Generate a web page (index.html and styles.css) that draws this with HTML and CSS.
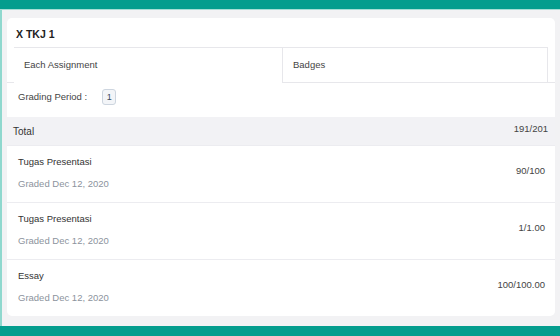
FILE: index.html
```html
<!DOCTYPE html>
<html lang="en">
<head>
<meta charset="UTF-8" />
<meta name="viewport" content="width=device-width, initial-scale=1" />
<title>X TKJ 1 - Grades</title>
<link rel="stylesheet" href="styles.css">
</head>
<body>

  <div class="topbar"></div>

  <div class="page">
    <div class="card">
      <h1 class="class-name">X TKJ 1</h1>

      <!-- Tabs -->
      <div class="tabs">
        <div class="tab active">Each Assignment</div>
        <div class="tab">Badges</div>
      </div>

      <div class="period">
        Grading Period :
        <span class="period-badge">1</span>
      </div>

      <div class="total-row">
        <span class="total-label">Total</span>
        <span class="total-score">191/201</span>
      </div>

      <ul class="grades">
        <li class="grade">
          <div class="grade-info">
            <div class="grade-title">Tugas Presentasi</div>
            <div class="grade-date">Graded Dec 12, 2020</div>
          </div>
          <div class="grade-score">90/100</div>
        </li>
        <li class="grade">
          <div class="grade-info">
            <div class="grade-title">Tugas Presentasi</div>
            <div class="grade-date">Graded Dec 12, 2020</div>
          </div>
          <div class="grade-score">1/1.00</div>
        </li>
        <li class="grade">
          <div class="grade-info">
            <div class="grade-title">Essay</div>
            <div class="grade-date">Graded Dec 12, 2020</div>
          </div>
          <div class="grade-score">100/100.00</div>
        </li>
      </ul>
    </div>
  </div>

  <div class="bottombar"></div>

</body>
</html>
```

FILE: styles.css
```css
/* Page frame */
body {
  margin: 0;
  padding: 0;
  font-family: 'Liberation Sans', Arial, sans-serif;
  font-size: 9.5px;
  color: #3a3a3a;
  background: #f2f2f4;
  height: 336px;
  overflow: hidden;
}
.topbar {
  height: 9px;
  background: #049d8e;
  border-bottom: 1px solid #a6ded6;
}
.bottombar {
  height: 10px;
  background: #049d8e;
}
.page {
  height: 298px;
  padding: 8px 5px 10px 5px;
  border-left: 2px solid #8fd8ce;
}

/* Card */
.card {
  height: 298px;
  background: #fff;
  border-radius: 5px;
  overflow: hidden;
}
.class-name {
  margin: 0;
  padding: 9px 9px 6px;
  font-size: 10.5px;
  line-height: 14px;
  font-weight: bold;
  color: #222;
}

/* Tabs */
.tabs {
  display: flex;
  padding: 0 7px;
  border-bottom: 1px solid #e7e7eb;
}
.tab {
  flex: 1;
  padding-left: 10px;
  line-height: 34px;
  border: 1px solid #e7e7eb;
  border-bottom: 0;
  color: #444;
}
.tab.active {
  flex: 0 0 258px;
  border-left: 0;
  border-right: 0;
  border-bottom: 1px solid #fff;
  margin-bottom: -1px;
}

/* Grading period */
.period {
  display: flex;
  align-items: flex-start;
  height: 27px;
  padding: 7px 0 0 11px;
  line-height: 14px;
  color: #444;
}
.period-badge {
  margin: -1px 0 0 15px;
  width: 12px;
  height: 14px;
  line-height: 14px;
  text-align: center;
  font-size: 9px;
  color: #3b4a5e;
  background: #f3f5f8;
  border: 1px solid #cdd5df;
  border-radius: 3px;
}

/* Total */
.total-row {
  display: flex;
  justify-content: space-between;
  align-items: center;
  height: 28px;
  padding: 0 7px 0 6px;
  background: #f2f2f5;
}
.total-label {
  font-size: 10px;
  color: #333;
}
.total-score {
  margin-top: -5px;
  color: #444;
}

/* Grade rows */
.grades {
  list-style: none;
  margin: 0;
  padding: 0;
}
.grade {
  display: flex;
  justify-content: space-between;
  align-items: flex-start;
  height: 56px;
  padding: 0 10px 0 11px;
  border-top: 1px solid #ececf0;
}
.grade-title {
  margin-top: 9px;
  line-height: 14px;
  color: #333;
}
.grade-date {
  margin-top: 8px;
  line-height: 14px;
  color: #8c939d;
}
.grade-score {
  padding-top: 18px;
  line-height: 14px;
  color: #444;
}
```
